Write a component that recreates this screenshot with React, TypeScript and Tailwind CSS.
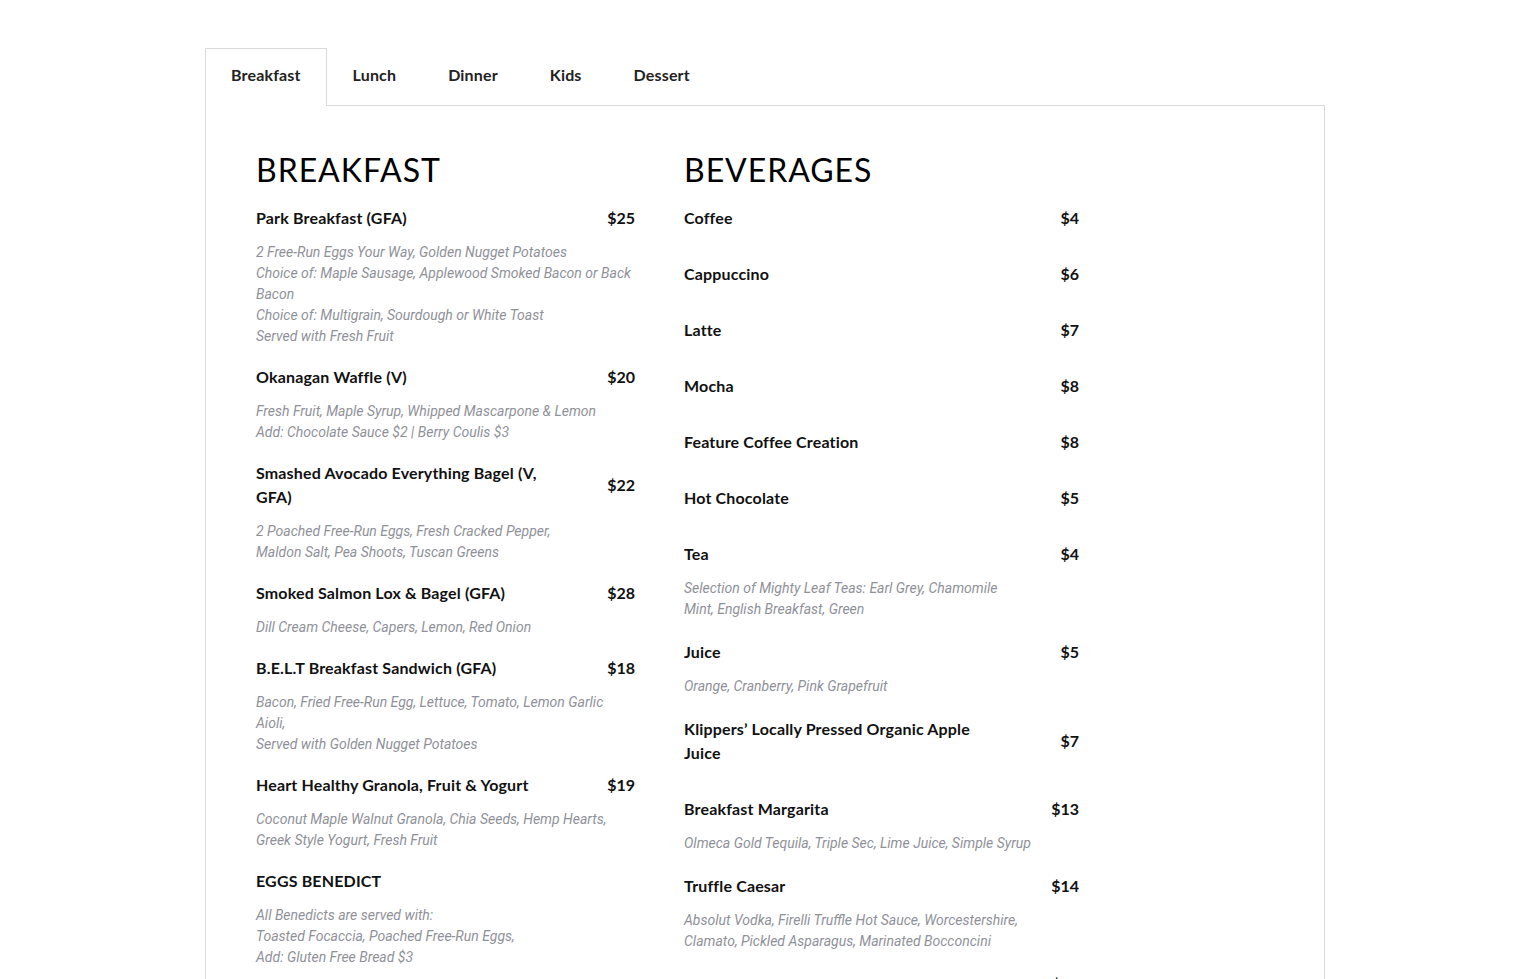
import React from 'react';

type Item = {
  name: string[];
  price?: string;
  desc?: string[];
};

const breakfast: Item[] = [
  {
    name: ['Park Breakfast (GFA)'],
    price: '$25',
    desc: [
      '2 Free-Run Eggs Your Way, Golden Nugget Potatoes',
      'Choice of: Maple Sausage, Applewood Smoked Bacon or Back',
      'Bacon',
      'Choice of: Multigrain, Sourdough or White Toast',
      'Served with Fresh Fruit',
    ],
  },
  {
    name: ['Okanagan Waffle (V)'],
    price: '$20',
    desc: ['Fresh Fruit, Maple Syrup, Whipped Mascarpone & Lemon', 'Add: Chocolate Sauce $2 | Berry Coulis $3'],
  },
  {
    name: ['Smashed Avocado Everything Bagel (V,', 'GFA)'],
    price: '$22',
    desc: ['2 Poached Free-Run Eggs, Fresh Cracked Pepper,', 'Maldon Salt, Pea Shoots, Tuscan Greens'],
  },
  {
    name: ['Smoked Salmon Lox & Bagel (GFA)'],
    price: '$28',
    desc: ['Dill Cream Cheese, Capers, Lemon, Red Onion'],
  },
  {
    name: ['B.E.L.T Breakfast Sandwich (GFA)'],
    price: '$18',
    desc: ['Bacon, Fried Free-Run Egg, Lettuce, Tomato, Lemon Garlic', 'Aioli,', 'Served with Golden Nugget Potatoes'],
  },
  {
    name: ['Heart Healthy Granola, Fruit & Yogurt'],
    price: '$19',
    desc: ['Coconut Maple Walnut Granola, Chia Seeds, Hemp Hearts,', 'Greek Style Yogurt, Fresh Fruit'],
  },
  {
    name: ['EGGS BENEDICT'],
    desc: ['All Benedicts are served with:', 'Toasted Focaccia, Poached Free-Run Eggs,', 'Add: Gluten Free Bread $3'],
  },
];

const beverages: Item[] = [
  { name: ['Coffee'], price: '$4' },
  { name: ['Cappuccino'], price: '$6' },
  { name: ['Latte'], price: '$7' },
  { name: ['Mocha'], price: '$8' },
  { name: ['Feature Coffee Creation'], price: '$8' },
  { name: ['Hot Chocolate'], price: '$5' },
  {
    name: ['Tea'],
    price: '$4',
    desc: ['Selection of Mighty Leaf Teas: Earl Grey, Chamomile', 'Mint, English Breakfast, Green'],
  },
  { name: ['Juice'], price: '$5', desc: ['Orange, Cranberry, Pink Grapefruit'] },
  { name: ['Klippers’ Locally Pressed Organic Apple', 'Juice'], price: '$7' },
  {
    name: ['Breakfast Margarita'],
    price: '$13',
    desc: ['Olmeca Gold Tequila, Triple Sec, Lime Juice, Simple Syrup'],
  },
  {
    name: ['Truffle Caesar'],
    price: '$14',
    desc: ['Absolut Vodka, Firelli Truffle Hot Sauce, Worcestershire,', 'Clamato, Pickled Asparagus, Marinated Bocconcini'],
  },
  { name: ['Spiked Cold Brew'], price: '$12' },
];

const tabs = ['Breakfast', 'Lunch', 'Dinner', 'Kids', 'Dessert'];

function MenuItem({ item, gap }: { item: Item; gap: string }) {
  return (
    <div className={`flex flex-col ${gap}`}>
      <div className="flex items-center justify-between">
        <h3 className="font-['Lato'] font-bold text-[16px] leading-[24px] text-[#111] tracking-[0.01em]">
          {item.name.map((line, i) => (
            <span key={i} className="block">
              {line}
            </span>
          ))}
        </h3>
        {item.price && (
          <span className="font-['Lato'] font-bold text-[16px] leading-[24px] text-[#111]">{item.price}</span>
        )}
      </div>
      <p className="mt-3 font-['Roboto'] italic text-[14px] leading-[21px] text-[#8f9199]">
        {item.desc?.map((line, i) => (
          <span key={i} className="block">
            {line}
          </span>
        ))}
      </p>
    </div>
  );
}

function Section({ title, items, width, gap }: { title: string; items: Item[]; width: string; gap: string }) {
  return (
    <section className={width}>
      <h2 className="font-['Lato'] text-[32px] leading-[40px] tracking-[0.03em] text-black mb-4">{title}</h2>
      {items.map((item, i) => (
        <MenuItem key={i} item={item} gap={gap} />
      ))}
    </section>
  );
}

export default function App() {
  return (
    <main className="h-[979px] overflow-hidden bg-white pt-12">
      <div className="w-[1120px] ml-[205px]">
        <div className="flex">
          {tabs.map((tab, i) => (
            <button
              key={tab}
              className={
                i === 0
                  ? "relative -mb-px h-[58px] pb-[6px] px-[25px] border border-b-0 border-[#dadada] bg-white font-['Lato'] font-bold text-[16px] text-[#222] tracking-[0.01em]"
                  : "h-[57px] pb-1 px-[26px] font-['Lato'] font-bold text-[16px] text-[#222] tracking-[0.01em]"
              }
            >
              {tab}
            </button>
          ))}
        </div>
        <div className="border border-[#dadada] pl-[50px] pt-[44px] h-[900px]">
          <div className="flex gap-[49px]">
            <Section title="BREAKFAST" items={breakfast} width="w-[379px]" gap="mb-[18px]" />
            <Section title="BEVERAGES" items={beverages} width="w-[395px]" gap="mb-5" />
          </div>
        </div>
      </div>
    </main>
  );
}
